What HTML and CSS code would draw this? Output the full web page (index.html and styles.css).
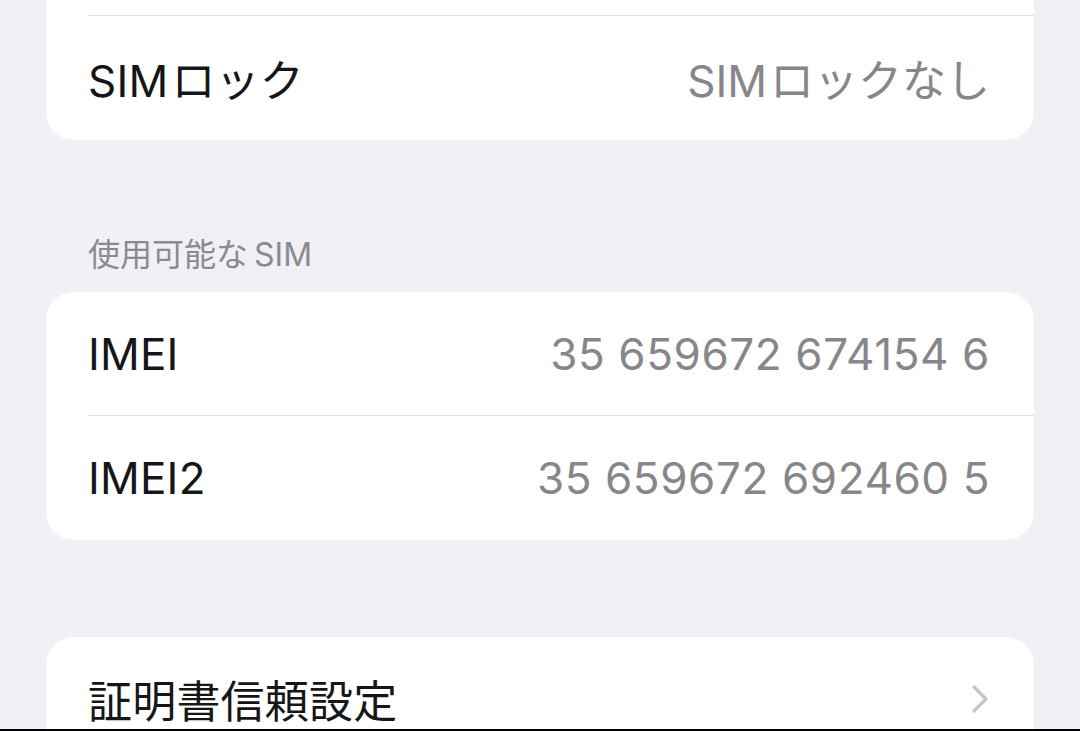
FILE: index.html
```html
<!DOCTYPE html>
<html lang="ja">
<head>
<meta charset="utf-8">
<title>情報</title>
<link rel="stylesheet" href="styles.css">
</head>
<body>
<div class="screen">
  <div class="card card-top">
    <div class="row"><div class="row-inner sep"></div></div>
    <div class="row"><div class="row-inner"><span class="label"><span class="lat">SIM</span>ロック</span><span class="value"><span class="lat">SIM</span>ロックなし</span></div></div>
  </div>

  <div class="section-header">使用可能な<span class="lat-pre">SIM</span></div>
  <div class="card">
    <div class="row"><div class="row-inner sep"><span class="label">IMEI</span><span class="value num">35 659672 674154 6</span></div></div>
    <div class="row"><div class="row-inner"><span class="label">IMEI2</span><span class="value num">35 659672 692460 5</span></div></div>
  </div>

  <div class="card card-gap">
    <div class="row"><div class="row-inner"><span class="label">証明書信頼設定</span>
      <svg class="chev" width="20" height="30" viewBox="0 0 20 30"><path d="M4 3 L16 15 L4 27" fill="none" stroke="#c5c5c9" stroke-width="3.2" stroke-linecap="round" stroke-linejoin="round"/></svg>
    </div></div>
  </div>
</div>
</body>
</html>
```

FILE: styles.css
```css
html { background: #000; }
body {
  margin: 0;
  height: 731px;
  font-family: Inter, "Noto Sans CJK JP", sans-serif;
}
.screen {
  height: 729px;
  overflow: hidden;
  background: #f1f0f7;
  padding: 0 46px;
  box-sizing: border-box;
}
.card {
  background: #fff;
  border-radius: 28px;
  overflow: hidden;
}
.card-top { margin-top: -108px; }
.card-gap { margin-top: 97px; }
.row { padding-left: 42px; }
.row-inner {
  height: 124px;
  box-sizing: border-box;
  padding-right: 44px;
  display: flex;
  align-items: center;
  justify-content: space-between;
}
.row-inner.sep { border-bottom: 1px solid #e2e2e6; }
.label {
  font-size: 44px;
  color: #161618;
  letter-spacing: 0.2px;
}
.value {
  font-size: 44px;
  color: #86868b;
}
.lat { margin-right: 3px; }
.lat-pre { margin-left: 6px; }
.num { letter-spacing: 0.6px; }
.section-header {
  margin: 98px 0 20px 42px;
  font-size: 32px;
  line-height: 34px;
  color: #8a8a8f;
}
.chev { margin-right: 0; }
```
